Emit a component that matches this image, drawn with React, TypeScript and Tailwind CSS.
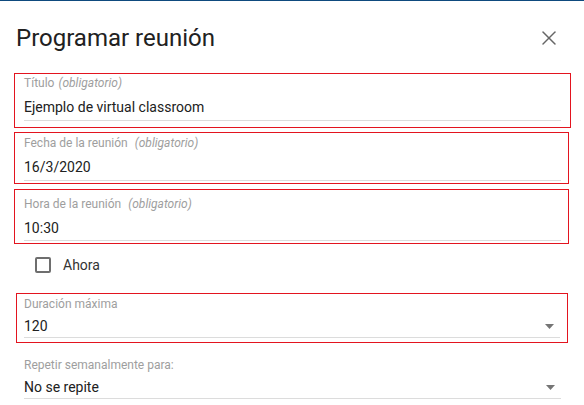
import React from 'react';
import { X } from 'lucide-react';

const Caret = () => (
  <svg width="9" height="5" viewBox="0 0 9 5" className="mr-[6px] shrink-0">
    <path d="M0 0 L9 0 L4.5 5 Z" fill="#757575" />
  </svg>
);

const Label = ({ text, hint, gap = 'ml-1' }: { text: string; hint?: string; gap?: string }) => (
  <div className="text-[12px] leading-[16px] text-[#9e9e9e]">
    {text}
    {hint && <span className={`italic ${gap}`}>{hint}</span>}
  </div>
);

const Underline = ({ className = '' }: { className?: string }) => (
  <div className={`h-px bg-[#dcdcdc] ${className}`} />
);

const App = () => {
  return (
    <div className="w-[584px] h-[405px] overflow-hidden bg-white font-['Roboto','Liberation_Sans',sans-serif]">
      <div className="h-px bg-[#0e4a7e]" />

      <div className="flex items-center justify-between pl-4 pr-[23px] pt-[21px] mb-[19px]">
        <h1 className="text-[24px] leading-[32px] font-normal text-[#212121]">Programar reunión</h1>
        <X size={24} strokeWidth={1.5} className="text-[#666]" />
      </div>

      <div className="ml-[14px] w-[557px] border border-[#e3141f] pl-[9px] pr-[9px] pt-[1px] pb-[6px]">
        <Label text="Título" hint="(obligatorio)" />
        <div className="mt-[6px] text-[14px] leading-[20px] text-[#212121]">Ejemplo de virtual classroom</div>
        <Underline className="mt-[3px]" />
      </div>

      <div className="mt-[4px] ml-[14px] w-[555px] border border-[#e3141f] pl-[9px] pr-[7px] pt-[2px] pb-[2px]">
        <Label text="Fecha de la reunión" hint="(obligatorio)" gap="ml-[7px]" />
        <div className="mt-[6px] text-[14px] leading-[20px] text-[#212121]">16/3/2020</div>
        <Underline className="mt-[3px]" />
      </div>

      <div className="mt-[5px] ml-[14px] w-[555px] border border-[#e3141f] pl-[9px] pr-[7px] pt-[6px] pb-[2px]">
        <Label text="Hora de la reunión" hint="(obligatorio)" gap="ml-[7px]" />
        <div className="mt-[6px] text-[14px] leading-[20px] text-[#212121]">10:30</div>
        <Underline className="mt-[2px]" />
      </div>

      <div className="mt-[13px] mb-[20px] ml-[35px] flex items-center">
        <div className="w-4 h-4 rounded-[2px] border-2 border-[#6e6e6e]" />
        <span className="ml-[12px] text-[14px] leading-[16px] text-[#333]">Ahora</span>
      </div>

      <div className="ml-[16px] w-[552px] border border-[#e3141f] pl-[7px] pr-[7px] pt-[2px] pb-[4px]">
        <Label text="Duración máxima" />
        <div className="mt-[4px] flex items-center justify-between text-[14px] leading-[20px] text-[#212121]">
          <span>120</span>
          <Caret />
        </div>
        <Underline className="mt-[1px]" />
      </div>

      <div className="ml-[24px] w-[537px] mt-[14px]">
        <Label text="Repetir semanalmente para:" />
        <div className="mt-[4px] flex items-center justify-between text-[14px] leading-[20px] text-[#212121]">
          <span>No se repite</span>
          <Caret />
        </div>
        <Underline className="mt-[1px]" />
      </div>
    </div>
  );
};

export default App;
